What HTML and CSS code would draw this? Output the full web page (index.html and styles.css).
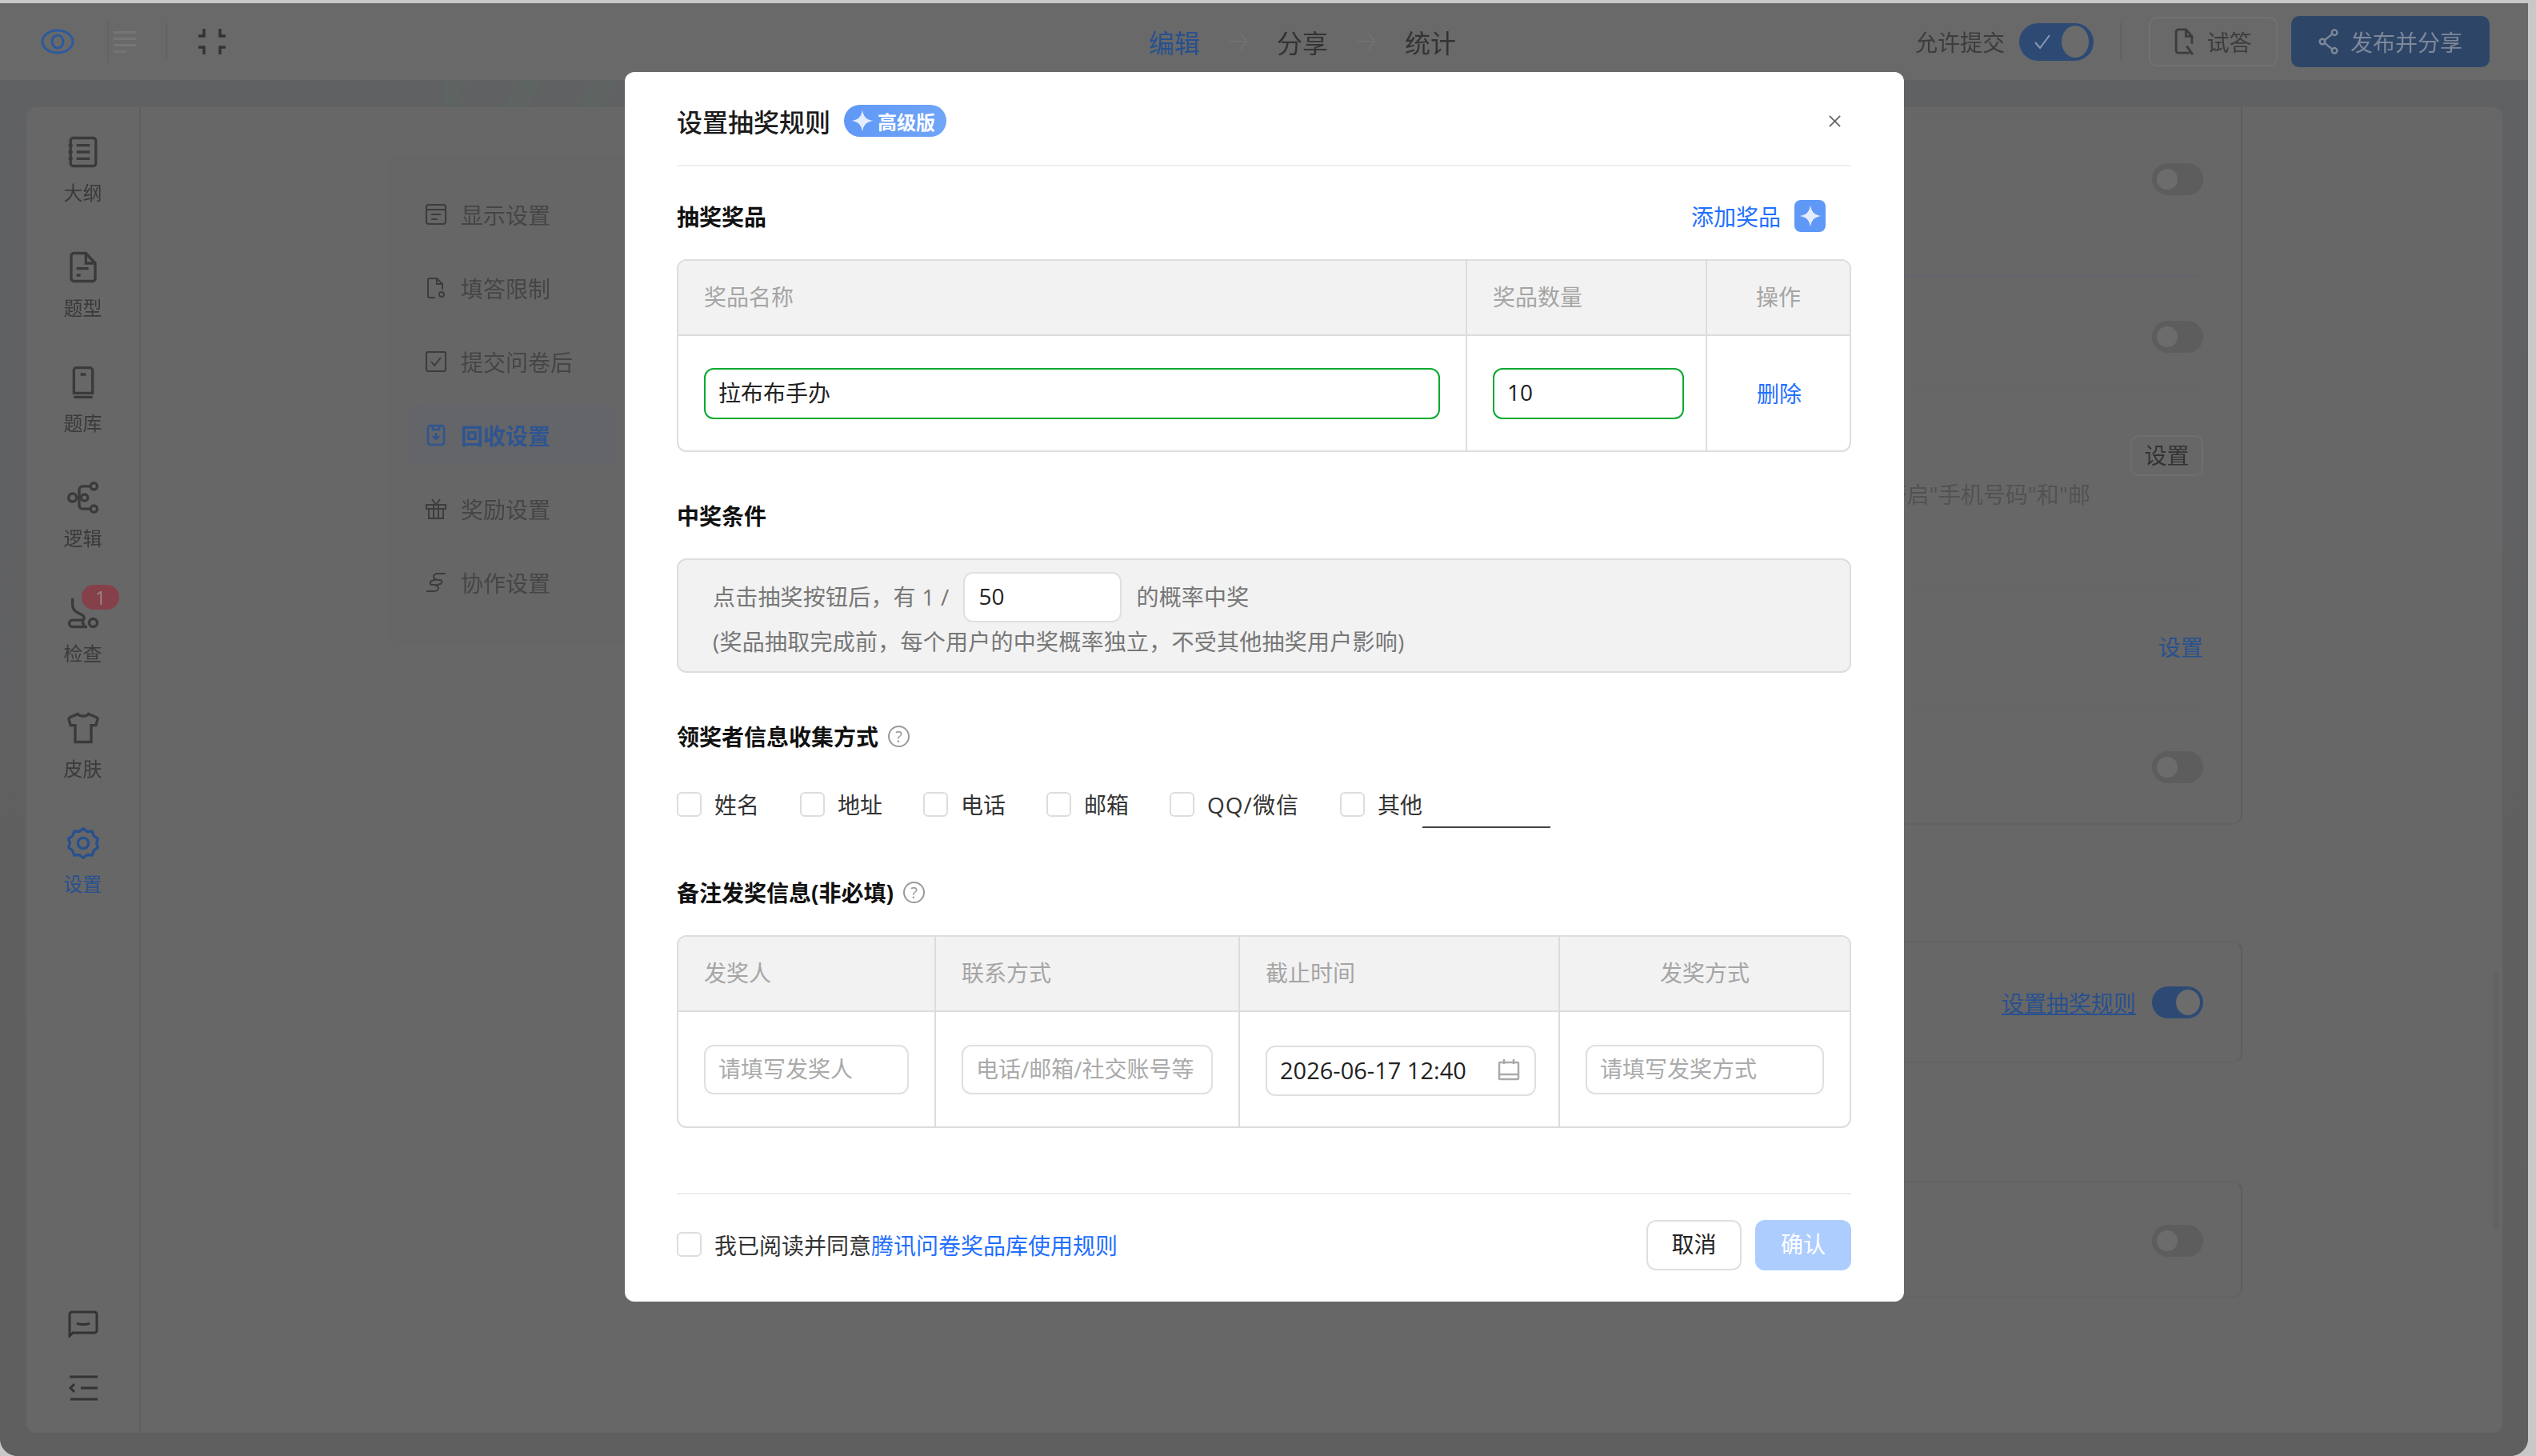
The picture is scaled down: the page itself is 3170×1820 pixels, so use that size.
FILE: index.html
```html
<!DOCTYPE html>
<html lang="zh-CN">
<head>
    <meta charset="UTF-8">
    <title>设置抽奖规则</title>
    <link rel="stylesheet" href="styles.css">
</head>
<body>
    <div class="window">
        <!-- page behind the dialog, already dimmed -->
        <div class="backdrop">
            <header class="topbar">
                <div class="top-left">
                    <svg class="eye-icon" viewBox="0 0 42 32" fill="none" stroke="currentColor" stroke-width="3"><ellipse cx="21" cy="16" rx="19" ry="14"/><ellipse cx="21" cy="16" rx="7" ry="8"/></svg>
                    <span class="top-sep first"></span>
                    <svg class="list-icon" viewBox="0 0 28 28" fill="currentColor"><rect y="1" width="28" height="3"/><rect y="9" width="28" height="3"/><rect y="17" width="28" height="3"/><rect y="25" width="16" height="3"/></svg>
                    <span class="top-sep second"></span>
                    <svg class="shrink-icon" viewBox="0 0 36 36" fill="none" stroke="currentColor" stroke-width="3.5"><path d="M8 2v9H1M28 2v9h7M8 34v-9H1M28 34v-9h7"/></svg>
                </div>
                <nav class="steps">
                    <span class="step-on">编辑</span>
                    <svg class="step-arrow" viewBox="0 0 24 24" fill="none" stroke="currentColor" stroke-width="2"><path d="M0 12h23M14 2l9 10-9 10"/></svg>
                    <span>分享</span>
                    <svg class="step-arrow" viewBox="0 0 24 24" fill="none" stroke="currentColor" stroke-width="2"><path d="M0 12h23M14 2l9 10-9 10"/></svg>
                    <span>统计</span>
                </nav>
                <div class="top-right">
                    <span class="allow-label">允许提交</span>
                    <span class="big-switch">
                        <svg viewBox="0 0 24 24" fill="none" stroke="currentColor" stroke-width="2"><path d="M3 13l6 7L21 4"/></svg>
                        <i></i>
                    </span>
                    <span class="top-sep third"></span>
                    <span class="try-btn">
                        <svg viewBox="0 0 26 36" fill="none" stroke="currentColor" stroke-width="3"><path d="M20 33H5a3 3 0 0 1-3-3V5a3 3 0 0 1 3-3h10l8 9v10"/><path d="M15 2v9h8M16 24l8 11"/></svg>
                        试答
                    </span>
                    <span class="publish-btn">
                        <svg viewBox="0 0 26 36" fill="none" stroke="currentColor" stroke-width="2.5"><circle cx="21" cy="6" r="3.5"/><circle cx="5" cy="18" r="3.5"/><circle cx="21" cy="30" r="3.5"/><path d="M18 8L8 16M8 20l10 8"/></svg>
                        发布并分享
                    </span>
                </div>
            </header>

            <main class="stage">
                <div class="panel">
                    <aside class="sidebar">
                        <div class="side-item">
                            <svg viewBox="0 0 24 24" fill="none" stroke="currentColor" stroke-width="2"><rect x="2.5" y="1.5" width="19" height="21" rx="2"/><path d="M7 7h10M7 12h10M7 17h10M1 7h3M1 12h3M1 17h3"/></svg>
                            <span>大纲</span>
                        </div>
                        <div class="side-item">
                            <svg viewBox="0 0 24 24" fill="none" stroke="currentColor" stroke-width="2"><path d="M14 1.5H5a2 2 0 0 0-2 2v17a2 2 0 0 0 2 2h14a2 2 0 0 0 2-2V9z"/><path d="M14 1.5V9h7M7 13h9M7 18h3"/></svg>
                            <span>题型</span>
                        </div>
                        <div class="side-item">
                            <svg viewBox="0 0 24 24" fill="none" stroke="currentColor" stroke-width="2"><path d="M5 20V3a2 2 0 0 1 2-2h10a2 2 0 0 1 2 2v17zM5 23h14M10 6h4"/></svg>
                            <span>题库</span>
                        </div>
                        <div class="side-item">
                            <svg viewBox="0 0 24 24" fill="none" stroke="currentColor" stroke-width="2"><circle cx="4" cy="12" r="3"/><circle cx="13" cy="12" r="2.5"/><circle cx="20" cy="3.5" r="2.5"/><circle cx="20" cy="20.5" r="2.5"/><path d="M7 12h3.500M9 12V6a2.500 2.500 0 0 1 2.500-2.500h6M9 12v6a2.500 2.500 0 0 0 2.500 2.500h6"/></svg>
                            <span>逻辑</span>
                        </div>
                        <div class="side-item has-badge">
                            <svg viewBox="0 0 24 24" fill="none" stroke="currentColor" stroke-width="2"><path d="M4 1v5c0 3 2 5 4 6l3 1.500c2 1 2 3 1 4H4a2.500 2.500 0 0 0 0 5h11"/><path d="M11 18.500c1 1 1.500 2 1.500 4"/><circle cx="19.500" cy="19.500" r="3"/></svg>
                            <span>检查</span>
                            <b class="side-badge">1</b>
                        </div>
                        <div class="side-item">
                            <svg viewBox="0 0 24 24" fill="none" stroke="currentColor" stroke-width="2"><path d="M8 1.500c1 2 7 2 8 0l6 2.500c.8.400 1 1 .7 1.800L21.500 10H18v12.500H6V10H2.500L1.300 5.800C1 5 1.200 4.400 2 4z"/></svg>
                            <span>皮肤</span>
                        </div>
                        <div class="side-item active">
                            <svg viewBox="0 0 24 24" fill="none" stroke="currentColor" stroke-width="2"><path d="M12 1l3 2.300 3.700-.3 1.300 3.500 3 2.300-1 3.200 1 3.200-3 2.300-1.300 3.500-3.700-.3L12 23l-3-2.300-3.700.3L4 17.500 1 15.200 2 12 1 8.800l3-2.300L5.300 3 9 3.300z"/><circle cx="12" cy="12" r="4"/></svg>
                            <span>设置</span>
                        </div>
                        <div class="side-bottom">
                            <svg class="chat-icon" viewBox="0 0 38 34" fill="none" stroke="currentColor" stroke-width="3"><path d="M2 32V5a3 3 0 0 1 3-3h28a3 3 0 0 1 3 3v20a3 3 0 0 1-3 3H6z"/><path d="M11 16c3 2 13 2 16 0" stroke-width="3"/></svg>
                            <svg class="fold-icon" viewBox="0 0 36 32" fill="none" stroke="currentColor" stroke-width="3"><path d="M1 2h35M15 16h21M2 30h34M7 11l-5 5 5 5"/></svg>
                        </div>
                    </aside>

                    <div class="content">
                        <ul class="sub-menu">
                            <li>
                                <svg viewBox="0 0 28 28" fill="none" stroke="currentColor" stroke-width="2"><rect x="2" y="2" width="24" height="24" rx="3"/><path d="M2 8h24M8 14h12M8 20h8"/></svg>
                                显示设置
                            </li>
                            <li>
                                <svg viewBox="0 0 28 28" fill="none" stroke="currentColor" stroke-width="2"><path d="M13 26H6a2 2 0 0 1-2-2V4a2 2 0 0 1 2-2h9l7 7v7"/><path d="M15 2v7h7"/><circle cx="21" cy="22" r="3"/></svg>
                                填答限制
                            </li>
                            <li>
                                <svg viewBox="0 0 28 28" fill="none" stroke="currentColor" stroke-width="2"><rect x="2" y="2" width="24" height="24" rx="2"/><path d="M8 14l4 5 8-10"/></svg>
                                提交问卷后
                            </li>
                            <li class="active">
                                <svg viewBox="0 0 28 28" fill="none" stroke="currentColor" stroke-width="2.500"><rect x="4" y="2" width="20" height="24" rx="3"/><path d="M10 2v5h8V2M14 11v8M10 15l4 4 4-4"/></svg>
                                回收设置
                            </li>
                            <li>
                                <svg viewBox="0 0 28 28" fill="none" stroke="currentColor" stroke-width="2"><path d="M2 9h24v5H2zM5 14v12h18V14M11 9v17M17 9v17M9 2l5 7 5-7"/></svg>
                                奖励设置
                            </li>
                            <li>
                                <svg viewBox="0 0 28 28" fill="none" stroke="currentColor" stroke-width="2"><path d="M26 3H16c-3 0-5 2-5 4s3 4 6 4h2c3 0 3 4 0 5l-6 2M2 25h10c3 0 5-2 5-4s-3-4-6-4H9c-3 0-3-4 0-5l6-2"/></svg>
                                协作设置
                            </li>
                        </ul>

                        <div class="settings">
                            <section class="card">
                                <div class="row thin"></div>
                                <div class="row r197"><span class="switch"><i></i></span></div>
                                <div class="row r143"><span class="switch"><i></i></span></div>
                                <div class="row r245 stacked">
                                    <span class="set-btn">设置</span>
                                    <span class="hint">开启"手机号码"和"邮</span>
                                </div>
                                <div class="row r150"><span class="set-link">设置</span></div>
                                <div class="row r147 last"><span class="switch"><i></i></span></div>
                            </section>
                            <section class="card second">
                                <div class="row lucky"><span class="lucky-link">设置抽奖规则</span><span class="switch on"><i></i></span></div>
                            </section>
                            <section class="card third">
                                <div class="row lucky"><span class="switch"><i></i></span></div>
                            </section>
                        </div>
                        <span class="scroll-thumb"></span>
                    </div>
                </div>
            </main>
        </div>

        <!-- 设置抽奖规则 dialog -->
        <div class="dialog">
            <div class="dialog-head">
                <h2>设置抽奖规则</h2>
                <span class="pro-tag">
                    <svg viewBox="0 0 24 24"><path class="star" d="M12 1c1 7 4 10 11 11-7 1-10 4-11 11-1-7-4-10-11-11 7-1 10-4 11-11z"/></svg>
                    高级版
                </span>
                <svg class="close-icon" viewBox="0 0 18 18" fill="none" stroke="currentColor" stroke-width="2"><path d="M2 2l14 14M16 2L2 16"/></svg>
            </div>

            <div class="sec-title first">
                <span>抽奖奖品</span>
                <span class="add-prize">
                    添加奖品
                    <span class="add-box"><svg viewBox="0 0 24 24"><path class="star" d="M12 1c1 7 4 10 11 11-7 1-10 4-11 11-1-7-4-10-11-11 7-1 10-4 11-11z"/></svg></span>
                </span>
            </div>
            <div class="grid-table prize-table">
                <div class="th">奖品名称</div>
                <div class="th">奖品数量</div>
                <div class="th center">操作</div>
                <div class="td"><div class="field ok">拉布布手办</div></div>
                <div class="td count-cell"><div class="field ok">10</div></div>
                <div class="td center"><span class="link">删除</span></div>
            </div>

            <div class="sec-title">中奖条件</div>
            <div class="odds-box">
                <div class="odds-line">
                    <span>点击抽奖按钮后，有 1 /</span>
                    <div class="field odds-input">50</div>
                    <span>的概率中奖</span>
                </div>
                <p>(奖品抽取完成前，每个用户的中奖概率独立，不受其他抽奖用户影响)</p>
            </div>

            <div class="sec-title">
                <span class="title-help">领奖者信息收集方式 <span class="help">?</span></span>
            </div>
            <div class="checks">
                <label class="check"><i class="box"></i>姓名</label>
                <label class="check"><i class="box"></i>地址</label>
                <label class="check"><i class="box"></i>电话</label>
                <label class="check"><i class="box"></i>邮箱</label>
                <label class="check wide"><i class="box"></i>QQ/微信</label>
                <label class="check"><i class="box"></i>其他<span class="other-line"></span></label>
            </div>

            <div class="sec-title note-title">
                <span class="title-help">备注发奖信息(非必填) <span class="help">?</span></span>
            </div>
            <div class="grid-table note-table">
                <div class="th">发奖人</div>
                <div class="th">联系方式</div>
                <div class="th">截止时间</div>
                <div class="th center">发奖方式</div>
                <div class="td"><div class="field empty">请填写发奖人</div></div>
                <div class="td"><div class="field empty">电话/邮箱/社交账号等</div></div>
                <div class="td date-cell">
                    <div class="field date">
                        2026-06-17 12:40
                        <svg viewBox="0 0 28 28" fill="none" stroke="currentColor" stroke-width="2.5"><rect x="2" y="5" width="24" height="21" rx="1"/><path d="M2 20h24M8 1v6M20 1v6"/></svg>
                    </div>
                </div>
                <div class="td"><div class="field empty">请填写发奖方式</div></div>
            </div>

            <div class="dialog-foot">
                <label class="check"><i class="box"></i><span>我已阅读并同意<span class="link">腾讯问卷奖品库使用规则</span></span></label>
                <div class="foot-btns">
                    <span class="btn">取消</span>
                    <span class="btn primary">确认</span>
                </div>
            </div>
        </div>
    </div>
</body>
</html>
```

FILE: styles.css
```css
* {
    box-sizing: border-box;
}
body {
    margin: 0;
    height: 1820px;
    overflow: hidden;
    background-color: #c8c8c8;
    font-family: "Open Sans", "Noto Sans CJK SC", sans-serif;
    font-size: 28px;
    color: #222;
}
svg {
    display: block;
    flex: none;
}
.window {
    position: relative;
    width: 3160px;
    height: 1816px;
    margin-top: 4px;
    overflow: hidden;
    border-radius: 0 0 22px 22px;
    background-color: #606060;
}
.backdrop {
    height: 100%;
    filter: blur(0.5px);
}

/* top bar */
.topbar {
    display: flex;
    align-items: center;
    height: 96px;
    background-color: #696969;
}
.top-left {
    display: flex;
    align-items: center;
    width: 1436px;
    height: 100%;
    padding-left: 51px;
}
.eye-icon {
    width: 42px;
    height: 32px;
    color: #2b5a9e;
}
.top-sep {
    width: 2px;
    background-color: #626262;
}
.top-sep.first {
    height: 52px;
    margin-left: 41px;
}
.list-icon {
    width: 28px;
    height: 28px;
    margin-left: 6px;
    color: #757575;
}
.top-sep.second {
    height: 48px;
    margin-left: 37px;
}
.shrink-icon {
    width: 36px;
    height: 36px;
    margin-left: 38px;
    color: #333;
}
.steps {
    display: flex;
    align-items: center;
    font-size: 32px;
    color: #333;
}
.step-on {
    color: #28508f;
}
.step-arrow {
    width: 24px;
    height: 24px;
    margin: 0 36px;
    color: #707070;
}
.top-right {
    display: flex;
    align-items: center;
    margin-left: auto;
    padding-right: 48px;
}
.allow-label {
    color: #3c3c3c;
}
.big-switch {
    display: flex;
    align-items: center;
    justify-content: space-between;
    width: 93px;
    height: 47px;
    margin-left: 18px;
    padding: 0 6px 0 17px;
    border-radius: 24px;
    background-color: #2d4a75;
    color: #8b9ab0;
}
.big-switch svg {
    width: 24px;
    height: 24px;
}
.big-switch i {
    width: 34px;
    height: 40px;
    border-radius: 50%;
    background-color: #6b6b6b;
}
.top-sep.third {
    height: 48px;
    margin: 0 34px 0 33px;
}
.try-btn {
    display: flex;
    align-items: center;
    justify-content: center;
    gap: 15px;
    width: 161px;
    height: 62px;
    border: 2px solid #717171;
    border-radius: 10px;
    color: #3c3c3c;
}
.try-btn svg {
    width: 25px;
    height: 34px;
}
.publish-btn {
    display: flex;
    align-items: center;
    justify-content: center;
    gap: 15px;
    width: 248px;
    height: 64px;
    margin-left: 17px;
    border-radius: 10px;
    background-color: #2d4668;
    color: #7f8899;
}
.publish-btn svg {
    width: 25px;
    height: 34px;
}

/* grey stage with the white panel */
.stage {
    height: 1720px;
    padding: 34px 32px 29px 33px;
    background:
        repeating-linear-gradient(118deg, #5e6462 0 26px, transparent 26px 82px) 555px 0 / 225px 34px no-repeat,
        linear-gradient(180deg, #606163, #5f5f5f);
}
.panel {
    display: flex;
    height: 100%;
    border-radius: 12px;
    background-color: #676767;
}
.sidebar {
    display: flex;
    flex-direction: column;
    flex: none;
    width: 143px;
    padding-top: 6px;
    border-right: 2px solid #5e5e5e;
}
.side-item {
    position: relative;
    display: flex;
    flex-direction: column;
    align-items: center;
    gap: 19px;
    height: 144px;
    padding-top: 30px;
    font-size: 24px;
    line-height: 24px;
    color: #3a3a3a;
}
.side-item svg {
    width: 40px;
    height: 40px;
}
.side-item.active {
    color: #28508f;
}
.side-badge {
    position: absolute;
    top: 15px;
    left: 69px;
    width: 47px;
    height: 31px;
    border-radius: 16px;
    background-color: #86404a;
    font-size: 24px;
    font-weight: 400;
    line-height: 31px;
    text-align: center;
    color: #9c8486;
}
.side-bottom {
    display: flex;
    flex-direction: column;
    align-items: center;
    gap: 47px;
    margin-top: auto;
    padding-bottom: 40px;
}
.chat-icon {
    width: 38px;
    height: 34px;
    color: #333;
}
.fold-icon {
    width: 36px;
    height: 32px;
    color: #333;
}
.content {
    position: relative;
    display: flex;
    flex: 1;
    padding: 0 325px 0 311px;
}
.sub-menu {
    flex: none;
    width: 400px;
    height: 601px;
    margin: 65px 0 0;
    padding: 23px 0 0 22px;
    list-style: none;
    border-radius: 12px;
    background-color: #666;
    box-shadow: 0 0 0 2px #646569;
}
.sub-menu li {
    display: flex;
    align-items: center;
    gap: 17px;
    width: 260px;
    height: 92px;
    padding-left: 22px;
    border-radius: 12px;
    color: #454545;
}
.sub-menu li svg {
    width: 28px;
    height: 28px;
    color: #3c3c3c;
}
.sub-menu li.active {
    height: 75px;
    margin: 8px 0 9px;
    background-color: #636568;
    font-weight: 700;
    color: #2f5591;
}
.sub-menu li.active svg {
    color: #2f5591;
}
.settings {
    display: flex;
    flex: 1;
    flex-direction: column;
    margin-left: 40px;
}
.card {
    border-right: 2px solid #5e5e5e;
    border-bottom: 2px solid #626367;
    border-radius: 0 0 12px 0;
}
.card.second,
.card.third {
    border-top: 2px solid #626367;
    border-radius: 0 12px 12px 0;
}
.card.second {
    height: 153px;
    margin-top: 145px;
}
.card.third {
    height: 146px;
    margin-top: 147px;
}
.card.third .row {
    padding-top: 53px;
}
.row {
    display: flex;
    justify-content: flex-end;
    align-items: flex-start;
    margin-right: 47px;
    padding-top: 55px;
    border-bottom: 2px solid #63656a;
}
.row.thin {
    height: 15px;
    padding-top: 0;
}
.row.r197 {
    height: 197px;
}
.row.r143 {
    height: 143px;
}
.row.r245 {
    height: 245px;
}
.row.r150 {
    height: 150px;
}
.row.r147 {
    height: 145px;
}
.row.last,
.row.lucky {
    border-bottom: 0;
}
.row.lucky {
    align-items: center;
    gap: 20px;
}
.row.stacked {
    flex-direction: column;
    justify-content: flex-start;
    align-items: flex-end;
    white-space: nowrap;
}
.switch {
    display: flex;
    align-items: center;
    width: 64px;
    height: 40px;
    padding: 0 6px;
    border-radius: 20px;
    background-color: #5d5d5d;
}
.switch i {
    width: 26px;
    height: 26px;
    border-radius: 50%;
    background-color: #6c6c6c;
}
.switch.on {
    justify-content: flex-end;
    padding: 0 4px;
    background-color: #2d4a75;
}
.switch.on i {
    width: 30px;
    height: 32px;
}
.set-btn {
    width: 91px;
    height: 51px;
    border: 2px solid #6f6f6f;
    border-radius: 10px;
    line-height: 46px;
    text-align: center;
    color: #333;
}
.hint {
    margin: 3px 141px 0 0;
    line-height: 40px;
    color: #525252;
}
.set-link {
    line-height: 40px;
    color: #28508f;
}
.lucky-link {
    text-decoration: underline;
    color: #28508f;
}
.scroll-thumb {
    position: absolute;
    top: 1081px;
    right: 4px;
    width: 7px;
    height: 322px;
    border-radius: 4px;
    background-color: #626262;
}

/* dialog */
.dialog {
    position: absolute;
    top: 86px;
    left: 781px;
    width: 1599px;
    height: 1537px;
    padding: 0 66px 0 65px;
    border-radius: 12px;
    background-color: #fff;
}
.dialog-head {
    display: flex;
    align-items: center;
    height: 118px;
    padding-top: 6px;
    border-bottom: 2px solid #eee;
}
.dialog-head h2 {
    margin: 0;
    font-size: 32px;
    font-weight: 500;
    color: #1c1c1c;
}
.pro-tag {
    display: flex;
    align-items: center;
    gap: 4px;
    width: 128px;
    height: 40px;
    margin-left: 17px;
    padding-left: 8px;
    border-radius: 20px;
    background: linear-gradient(90deg, #5f98f6, #70a5f8);
    font-size: 24px;
    font-weight: 700;
    color: #fff;
}
.pro-tag svg {
    width: 30px;
    height: 30px;
}
.star {
    fill: #e4edfd;
}
.close-icon {
    width: 17px;
    height: 17px;
    margin-left: auto;
    margin-right: 12px;
    color: #666;
}
.sec-title {
    display: flex;
    align-items: center;
    justify-content: space-between;
    height: 40px;
    margin: 61px 0 32px;
    padding-bottom: 4px;
    font-weight: 700;
    color: #111;
}
.sec-title.first {
    margin-top: 44px;
}
.sec-title.note-title {
    margin-top: 77px;
}
.title-help {
    display: flex;
    align-items: center;
    gap: 12px;
}
.help {
    width: 27px;
    height: 27px;
    border: 2px solid #999;
    border-radius: 50%;
    font-size: 20px;
    font-weight: 400;
    line-height: 23px;
    text-align: center;
    color: #999;
}
.add-prize {
    display: flex;
    align-items: center;
    gap: 17px;
    margin-right: 32px;
    font-weight: 400;
    color: #1f6fff;
}
.add-box {
    display: flex;
    align-items: center;
    justify-content: center;
    width: 39px;
    height: 40px;
    border-radius: 8px;
    background-color: #5f98f6;
}
.add-box svg {
    width: 30px;
    height: 30px;
}
.grid-table {
    display: grid;
    grid-template-rows: 94px 143px;
    overflow: hidden;
    border: 2px solid #ddd;
    border-radius: 12px;
}
.prize-table {
    grid-template-columns: 984px 300px 1fr;
}
.note-table {
    grid-template-columns: 320px 380px 400px 1fr;
}
.th {
    display: flex;
    align-items: center;
    padding: 0 0 4px 32px;
    border-bottom: 2px solid #ddd;
    background-color: #f2f2f2;
    color: #a5a5a5;
}
.td {
    display: flex;
    align-items: center;
    padding: 0 32px;
}
.th + .th,
.td + .td {
    border-left: 2px solid #ddd;
}
.count-cell {
    padding-right: 27px;
}
.date-cell {
    padding-right: 28px;
}
.th.center {
    padding: 0 0 4px;
}
.center {
    justify-content: center;
    padding: 0 0 2px 2px;
}
.field {
    display: flex;
    align-items: center;
    width: 100%;
    height: 62px;
    padding: 0 0 3px 16px;
    border: 2px solid #e0e0e0;
    border-radius: 12px;
    background-color: #fff;
    white-space: nowrap;
}
.field.ok {
    height: 64px;
    border-color: #0aa92f;
}
.field.empty {
    color: #aaa;
}
.field.date {
    justify-content: space-between;
    height: 63px;
    margin-top: 4px;
    padding-right: 18px;
    font-size: 29px;
}
.field.date svg {
    width: 28px;
    height: 28px;
    color: #aaa;
}
.link {
    color: #1f6fff;
}
.odds-box {
    height: 143px;
    padding: 15px 0 0 43px;
    border: 2px solid #ddd;
    border-radius: 12px;
    background-color: #f2f2f2;
    color: #777;
}
.odds-line {
    display: flex;
    align-items: center;
    gap: 18px;
}
.odds-line span {
    padding-bottom: 3px;
    letter-spacing: 0.2px;
}
.odds-input {
    flex: none;
    width: 198px;
    height: 63px;
    padding-left: 17px;
    color: #222;
}
.odds-box p {
    margin: 4px 0 0;
    line-height: 40px;
    letter-spacing: 0.25px;
}
.checks {
    display: flex;
    gap: 51px;
    height: 30px;
    margin-top: 48px;
}
.check {
    display: flex;
    align-items: center;
    gap: 16px;
    height: 30px;
    color: #333;
}
.check.wide {
    letter-spacing: 1px;
}
.box {
    flex: none;
    width: 31px;
    height: 31px;
    border: 2px solid #ddd;
    border-radius: 6px;
}
.other-line {
    align-self: flex-start;
    width: 160px;
    height: 45px;
    margin-left: -16px;
    border-bottom: 2px solid #444;
}
.dialog-foot {
    display: flex;
    align-items: center;
    justify-content: space-between;
    height: 97px;
    margin-top: 81px;
    padding-top: 32px;
    border-top: 2px solid #eee;
}
.dialog-foot .check {
    padding-bottom: 2px;
}
.foot-btns {
    display: flex;
    gap: 17px;
}
.btn {
    width: 119px;
    height: 63px;
    border: 2px solid #e0e0e0;
    border-radius: 12px;
    line-height: 56px;
    text-align: center;
    color: #222;
}
.btn.primary {
    width: 120px;
    border: 0;
    background-color: #adcdff;
    line-height: 60px;
    color: #fff;
}
```
